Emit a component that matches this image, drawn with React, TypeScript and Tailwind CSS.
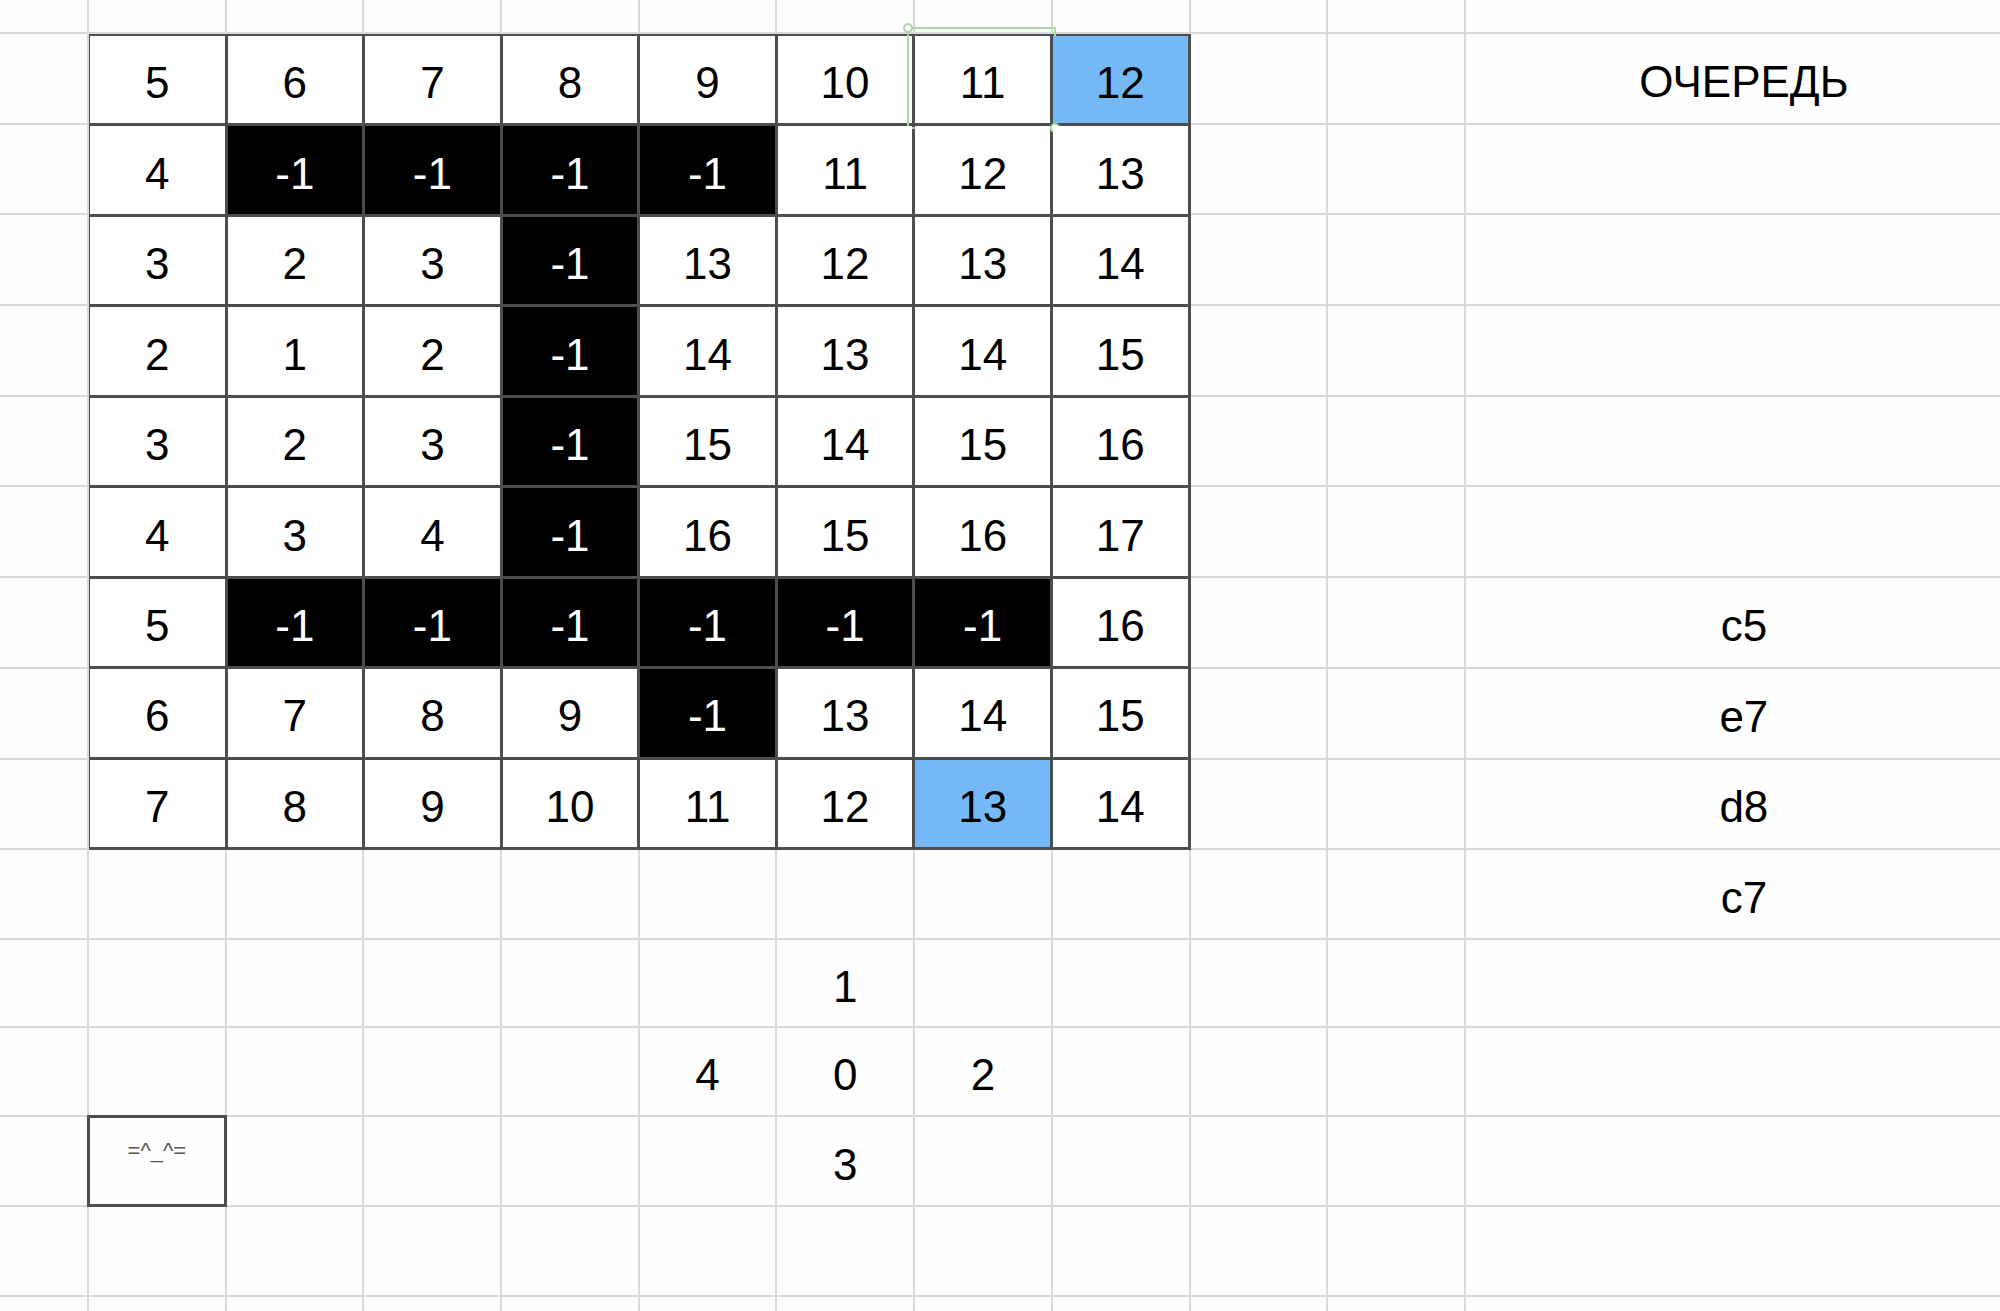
import React from "react";

const TABLE: number[][] = [
  [5, 6, 7, 8, 9, 10, 11, 12],
  [4, -1, -1, -1, -1, 11, 12, 13],
  [3, 2, 3, -1, 13, 12, 13, 14],
  [2, 1, 2, -1, 14, 13, 14, 15],
  [3, 2, 3, -1, 15, 14, 15, 16],
  [4, 3, 4, -1, 16, 15, 16, 17],
  [5, -1, -1, -1, -1, -1, -1, 16],
  [6, 7, 8, 9, -1, 13, 14, 15],
  [7, 8, 9, 10, 11, 12, 13, 14],
];

const BLUE = new Set(["0-7", "8-6"]);

const OUTER: Record<string, string> = {
  "1-11": "ОЧЕРЕДЬ",
  "7-11": "c5",
  "8-11": "e7",
  "9-11": "d8",
  "10-11": "c7",
  "11-6": "1",
  "12-5": "4",
  "12-6": "0",
  "12-7": "2",
  "13-6": "3",
};

const ROWS = 16;
const COLS = 12;

function inTable(r: number, c: number) {
  return r >= 1 && r <= 9 && c >= 1 && c <= 8;
}

function TableCell({ v, r, c }: { v: number; r: number; c: number }) {
  const blue = BLUE.has(`${r}-${c}`);
  const black = v === -1;
  const selected = r === 0 && c === 6;
  return (
    <div
      className={
        "relative flex items-center justify-center pt-[7px] text-[44px] leading-none " +
        (black ? "bg-black text-white" : blue ? "bg-[#74b8f5] text-black" : "bg-white text-black")
      }
    >
      <span>{v}</span>
      {selected && (
        <div className="absolute -left-[8px] -top-[9px] -right-[6px] -bottom-[6px] border-2 border-[#a6dca0]">
          <div className="absolute -left-[6px] -top-[6px] w-[10px] h-[10px] rounded-full bg-white border-2 border-[#a6dca0]" />
          <div className="absolute -right-[6px] -bottom-[6px] w-[10px] h-[10px] rounded-full bg-white border-2 border-[#a6dca0]" />
        </div>
      )}
    </div>
  );
}

export default function App() {
  const outerCells: React.ReactNode[] = [];
  for (let r = 0; r < ROWS; r++) {
    for (let c = 0; c < COLS; c++) {
      if (inTable(r, c)) continue;
      const key = `${r}-${c}`;
      if (key === "13-1") {
        outerCells.push(
          <div
            key={key}
            className="-ml-[2px] -mt-[2px] border-[3px] border-[#4d4d4d] flex justify-center pt-[22px] text-[22px] leading-none text-[#555]"
          >
            =^_^=
          </div>
        );
        continue;
      }
      outerCells.push(
        <div
          key={key}
          className="border-r-2 border-b-2 border-[#d9d9d9] flex items-center justify-center pt-[7px] text-[44px] leading-none text-black"
        >
          {OUTER[key] ?? ""}
        </div>
      );
    }
  }

  return (
    <div className="w-[2000px] h-[1311px] overflow-hidden bg-[#fefefe] font-['Liberation_Sans',Arial,sans-serif]">
      <div className="grid grid-cols-[89px_repeat(10,137.7px)_558px] grid-rows-[34px_repeat(9,90.7px)_90px_88px_89px_90px_90px_90px]">
        <div className="col-start-2 col-span-8 row-start-2 row-span-9 -ml-[2px] -mt-[1px] grid grid-cols-8 grid-rows-9 gap-[3px] border-[3px] border-[#4d4d4d] bg-[#4d4d4d]">
          {TABLE.map((row, r) =>
            row.map((v, c) => <TableCell key={`${r}-${c}`} v={v} r={r} c={c} />)
          )}
        </div>
        {outerCells}
      </div>
    </div>
  );
}
